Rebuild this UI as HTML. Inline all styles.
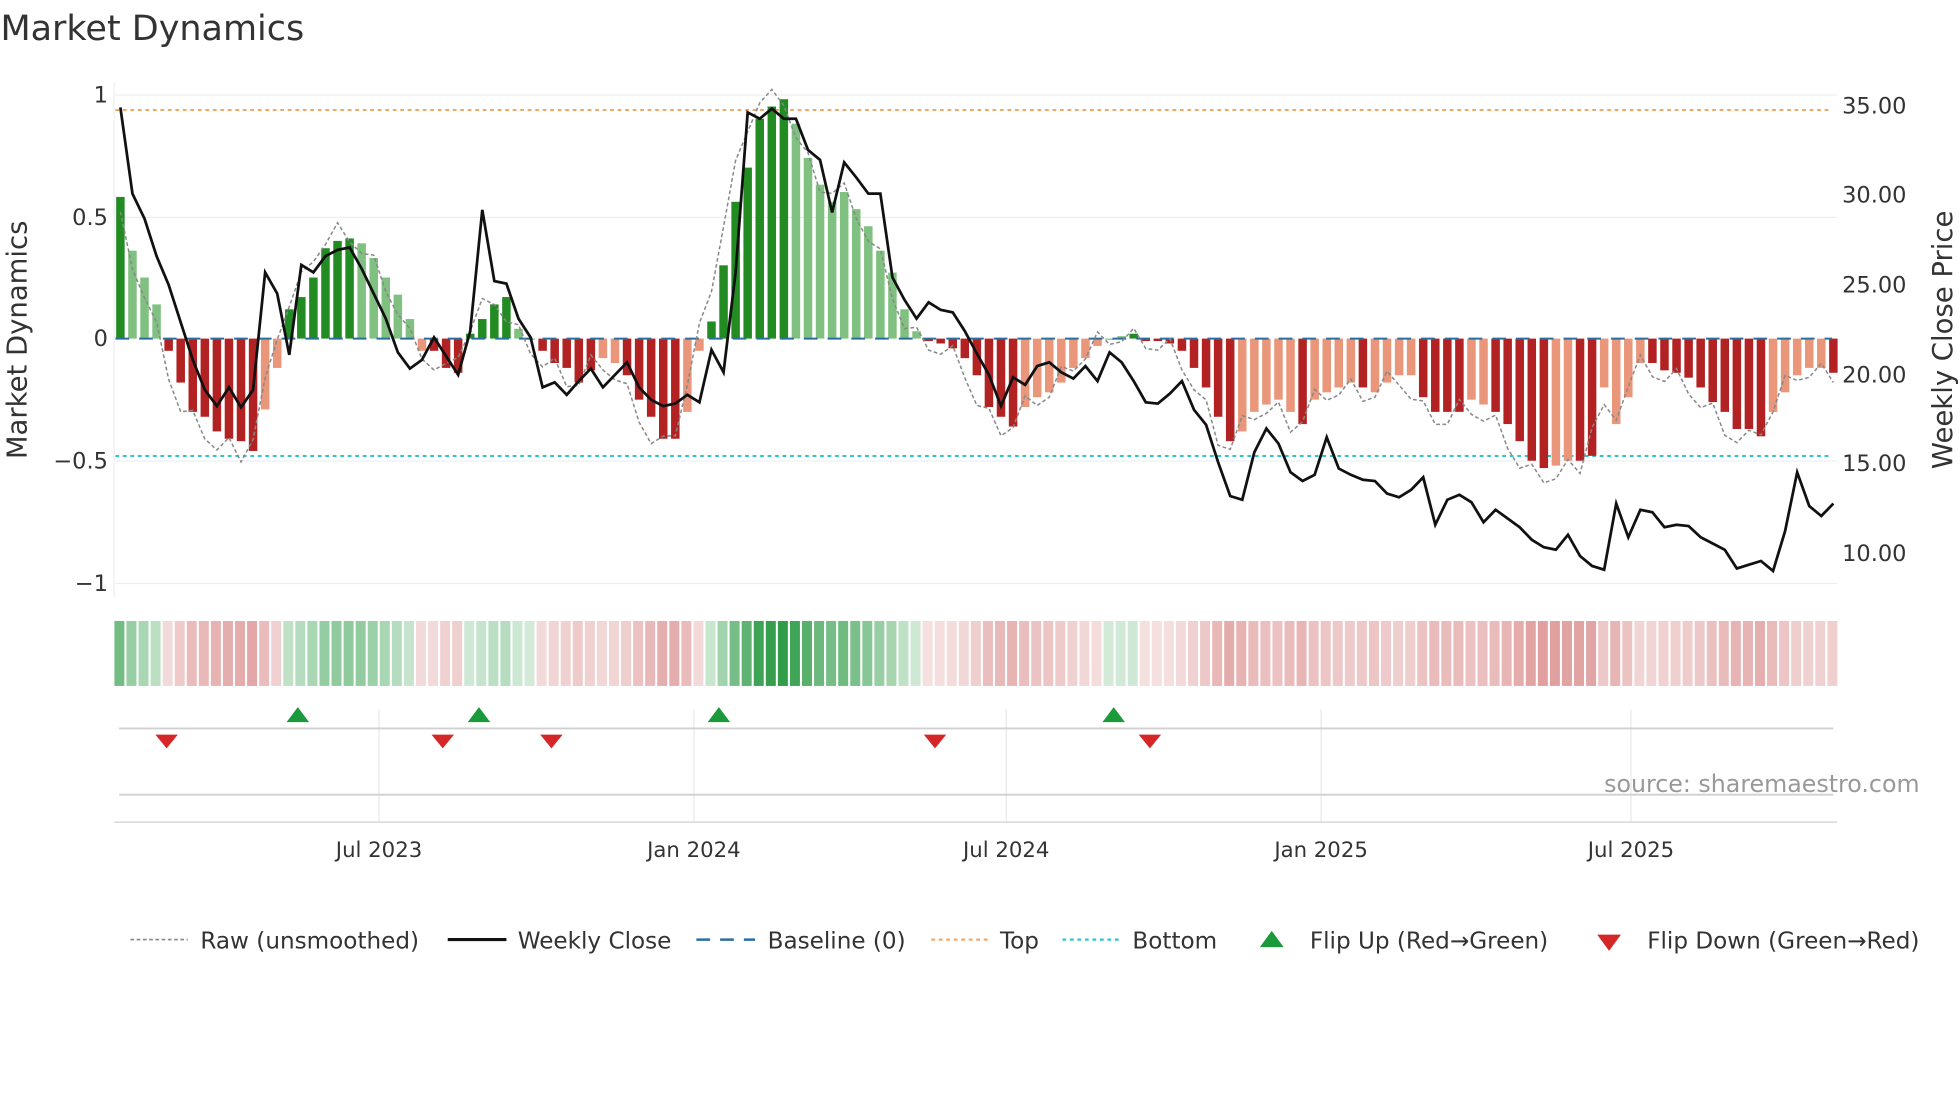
<!DOCTYPE html>
<html><head><meta charset="utf-8"><style>
html,body{margin:0;padding:0;background:#fff;width:1960px;height:1102px;overflow:hidden}
svg{display:block}
text{font-family:"DejaVu Sans","Liberation Sans",sans-serif;fill:#333}
</style></head><body>
<svg id="s" width="1960" height="1102" viewBox="0 0 1568 882" xmlns="http://www.w3.org/2000/svg">
<text x="0" y="32" font-size="28" fill="#333">Market Dynamics</text>
<g stroke="#eceff2" stroke-width="1">
<line x1="92" y1="76" x2="1470" y2="76"/><line x1="92" y1="174" x2="1470" y2="174"/>
<line x1="92" y1="369" x2="1470" y2="369"/><line x1="92" y1="467" x2="1470" y2="467"/>
<line x1="91" y1="66" x2="91" y2="478"/>
</g>
<g font-size="18" text-anchor="end">
<text x="86" y="82">1</text><text x="86" y="180">0.5</text><text x="86" y="277">0</text>
<text x="86" y="375">−0.5</text><text x="86" y="473">−1</text>
</g>
<g font-size="18">
<text x="1474" y="91">35.00</text><text x="1474" y="162">30.00</text><text x="1474" y="234">25.00</text>
<text x="1474" y="306">20.00</text><text x="1474" y="377">15.00</text><text x="1474" y="449">10.00</text>
</g>
<text transform="translate(21,272) rotate(-90)" font-size="22" text-anchor="middle">Market Dynamics</text>
<text transform="translate(1562,272) rotate(-90)" font-size="22" text-anchor="middle">Weekly Close Price</text>
<line x1="92" y1="88" x2="1466" y2="88" stroke="#f0a868" stroke-width="1.6" stroke-dasharray="3,3"/>
<line x1="92" y1="365" x2="1466" y2="365" stroke="#2ec4d0" stroke-width="1.6" stroke-dasharray="3,3"/>
<g id="bars"></g>
<line x1="92" y1="271" x2="1466" y2="271" stroke="#2b6ea0" stroke-width="1.6" stroke-dasharray="11,8"/>
<polyline id="raw" fill="none" stroke="#888" stroke-width="1.2" stroke-dasharray="3,2"/>
<polyline id="close" fill="none" stroke="#111" stroke-width="2.2"/>
<g id="heat"></g>
<g stroke="#e8e8e8" stroke-width="1">
<line x1="303" y1="568" x2="303" y2="658"/><line x1="555" y1="568" x2="555" y2="658"/>
<line x1="805" y1="568" x2="805" y2="658"/><line x1="1057" y1="568" x2="1057" y2="658"/>
<line x1="1305" y1="568" x2="1305" y2="658"/>
</g>
<line x1="95" y1="583" x2="1467" y2="583" stroke="#d0d0d0" stroke-width="1.5"/>
<line x1="95" y1="636" x2="1467" y2="636" stroke="#d0d0d0" stroke-width="1.5"/>
<line x1="91" y1="658" x2="1470" y2="658" stroke="#d8d8d8" stroke-width="1.2"/>
<g fill="#1a9a3a" id="up"></g><g fill="#d62728" id="dn"></g>
<text x="1536" y="634" font-size="19" text-anchor="end" style="fill:#999">source: sharemaestro.com</text>
<g font-size="17" text-anchor="middle">
<text x="303" y="686">Jul 2023</text><text x="555" y="686">Jan 2024</text><text x="805" y="686">Jul 2024</text>
<text x="1057" y="686">Jan 2025</text><text x="1305" y="686">Jul 2025</text>
</g>
<g font-size="18.5">
<line x1="104" y1="752" x2="150" y2="752" stroke="#888" stroke-width="1.3" stroke-dasharray="3,2"/><text x="160" y="759">Raw (unsmoothed)</text>
<line x1="358" y1="752" x2="405" y2="752" stroke="#111" stroke-width="2.5"/><text x="414" y="759">Weekly Close</text>
<line x1="557" y1="752" x2="604" y2="752" stroke="#2b6ea0" stroke-width="2" stroke-dasharray="11,8"/><text x="614" y="759">Baseline (0)</text>
<line x1="745" y1="752" x2="792" y2="752" stroke="#f0a868" stroke-width="1.8" stroke-dasharray="3,3"/><text x="800" y="759">Top</text>
<line x1="850" y1="752" x2="897" y2="752" stroke="#2ec4d0" stroke-width="1.8" stroke-dasharray="3,3"/><text x="906" y="759">Bottom</text>
<polygon points="1008,758 1027,758 1017.5,745" fill="#1a9a3a"/><text x="1048" y="759">Flip Up (Red→Green)</text>
<polygon points="1278,748 1297,748 1287.5,761" fill="#d62728"/><text x="1318" y="759">Flip Down (Green→Red)</text>
</g>
</svg>
<script>
var V=[[.58,1],[.36,0],[.25,0],[.14,0],[-.05,1],[-.18,1],[-.3,1],[-.32,1],[-.38,1],[-.41,1],[-.42,1],[-.46,1],[-.29,0],[-.12,0],
[.12,1],[.17,1],[.25,1],[.37,1],[.40,1],[.41,1],[.39,0],[.33,0],[.25,0],[.18,0],[.08,0],[-.05,0],[-.05,1],[-.12,1],[-.14,1],
[.02,1],[.08,1],[.14,1],[.17,1],[.04,0],[0,0],[-.05,1],[-.1,1],[-.12,1],[-.18,1],[-.13,1],[-.08,0],[-.1,0],[-.15,1],[-.25,1],[-.32,1],[-.41,1],[-.41,1],[-.3,0],[-.05,0],
[.07,1],[.3,1],[.56,1],[.7,1],[.9,1],[.95,1],[.98,1],[.88,0],[.74,0],[.63,0],[.56,0],[.6,0],[.53,0],[.46,0],[.36,0],[.27,0],[.12,0],[.03,0],
[-.01,1],[-.02,1],[-.04,1],[-.08,1],[-.15,1],[-.28,1],[-.32,1],[-.36,1],[-.28,0],[-.24,0],[-.22,0],[-.18,0],[-.12,0],[-.08,0],[-.03,0],[0,0],[.01,0],[.02,1],
[-.01,1],[-.01,1],[-.02,1],[-.05,1],[-.12,1],[-.2,1],[-.32,1],[-.42,1],[-.38,0],[-.3,0],[-.27,0],[-.25,0],[-.3,0],[-.35,1],[-.25,0],[-.22,0],[-.2,0],[-.18,0],[-.2,1],[-.22,0],[-.18,0],[-.15,0],[-.15,0],
[-.24,1],[-.3,1],[-.3,1],[-.3,1],[-.25,0],[-.27,0],[-.3,1],[-.35,1],[-.42,1],[-.5,1],[-.53,1],[-.52,0],[-.5,0],[-.5,1],[-.48,1],[-.2,0],[-.35,0],[-.24,0],[-.1,0],[-.1,1],[-.13,1],[-.14,1],[-.16,1],[-.2,1],[-.26,1],[-.3,1],[-.37,1],[-.37,1],[-.4,1],[-.3,0],[-.22,0],[-.15,0],[-.12,0],[-.12,0],[-.14,1]];
var C=[86,155,175,205,228,258,288,312,325,310,326,312,218,235,284,212,218,205,200,198,215,235,255,282,295,288,270,285,300,265,168,225,227,255,270,310,306,316,305,295,310,300,290,310,320,325,323,316,322,280,298,218,90,95,87,95,95,120,128,170,130,142,155,155,222,240,255,242,248,250,265,283,300,325,302,308,293,290,298,303,293,305,282,290,305,322,323,315,305,328,340,370,397,400,362,343,355,378,385,380,350,375,380,384,385,395,398,392,382,420,400,396,402,418,408,415,422,432,438,440,428,445,453,456,403,430,408,410,422,420,421,430,435,440,455,452,449,457,425,378,405,413,403,408];
var n=V.length,x0=96,step=(1467-96)/(n-1),b='',h='',r=[],c=[];
for(var i=0;i<n;i++){var v=V[i][0],dk=V[i][1],x=x0+i*step,y=271-v*195.5;
var col=v>=0?(dk?'#228b22':'#80c080'):(dk?'#b22222':'#e9967a');
b+='<rect x="'+(x-3.4)+'" y="'+Math.min(y,271)+'" width="6.8" height="'+Math.max(Math.abs(v*195.5),1)+'" fill="'+col+'"/>';
var hc=v>=0?'rgba(34,150,60,'+(0.2+Math.abs(v)*0.75)+')':'rgba(190,50,50,'+(0.15+Math.abs(v)*0.6)+')';
h+='<rect x="'+(x-4.8)+'" y="497" width="8" height="52" fill="'+hc+'"/>';
var nv=V[Math.min(i+1,n-1)][0];var rv=(v*0.4+nv*0.6)*1.07+(i%3==0?0.04:-0.03);if(rv>1.02)rv=1.02;
r.push(x+','+(271-rv*195.5));c.push(x+','+(C[i]||C[C.length-1]));}
document.getElementById('bars').innerHTML=b;document.getElementById('heat').innerHTML=h;
document.getElementById('raw').setAttribute('points',r.join(' '));document.getElementById('close').setAttribute('points',c.join(' '));
var u='',d='';[238,383,575,891].forEach(function(x){u+='<polygon points="'+(x-9)+',578 '+(x+9)+',578 '+x+',566"/>'});
[133,354,441,748,920].forEach(function(x){d+='<polygon points="'+(x-9)+',588 '+(x+9)+',588 '+x+',599"/>'});
document.getElementById('up').innerHTML=u;document.getElementById('dn').innerHTML=d;
</script>
</body></html>
